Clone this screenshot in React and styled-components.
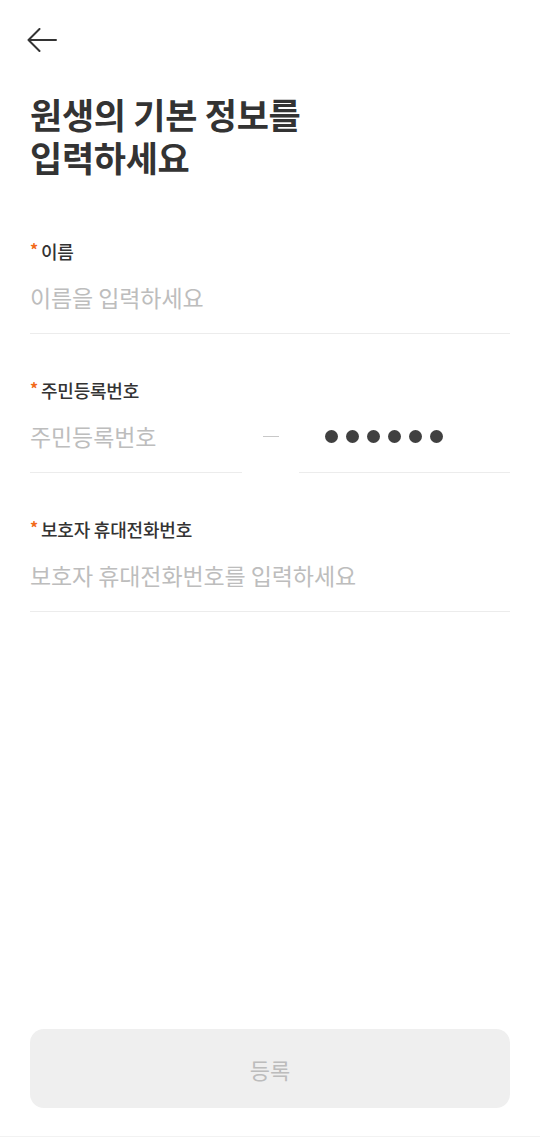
import React from 'react'
import styled, { createGlobalStyle } from 'styled-components'

const GlobalStyle = createGlobalStyle`
  * { box-sizing: border-box; }
  html, body { margin: 0; padding: 0; background: #fff; }
  body {
    font-family: "Noto Sans CJK KR", "Noto Sans", sans-serif;
    color: #333;
  }
`

const Page = styled.div`
  min-height: 1137px;
  display: flex;
  flex-direction: column;
  padding: 0 30px 28px;
  border-bottom: 1px solid #f2f2f2;
`

const Header = styled.div`
  height: 80px;
  display: flex;
  align-items: center;
  margin-left: -4px;
`

const BackButton = styled.button`
  border: none;
  background: none;
  padding: 0;
  cursor: pointer;
  display: flex;
  svg { display: block; }
`

const Title = styled.h1`
  margin: 12px 0 0;
  font-size: 35px;
  line-height: 43px;
  font-weight: 700;
  letter-spacing: -0.3px;
  color: #333;
`

const Form = styled.div`
  margin-top: 61px;
  display: flex;
  flex-direction: column;
  gap: 44px;
`

const Field = styled.div`
  display: flex;
  flex-direction: column;
`

const Label = styled.label`
  display: flex;
  align-items: center;
  height: 24px;
  font-size: 18px;
  font-weight: 500;
  color: #333;
  letter-spacing: -0.2px;
`

const Star = styled.span`
  color: #f26a1b;
  font-size: 16px;
  font-weight: 700;
  margin-right: 3px;
  align-self: flex-start;
  line-height: 20px;
`

const Row = styled.div`
  margin-top: 10px;
  display: flex;
  align-items: stretch;
`

const Input = styled.input`
  flex: ${p => (p.$half ? '0 0 212px' : '1')};
  width: 100%;
  min-width: 0;
  height: 61px;
  padding: 0 0 12px;
  border: none;
  border-bottom: 1px solid #ececec;
  outline: none;
  font-family: inherit;
  font-size: 23px;
  letter-spacing: -0.1px;
  color: #333;
  background: transparent;
  &::placeholder { color: #bdbdbd; }
`

const Dash = styled.div`
  flex: 1;
  display: flex;
  align-items: center;
  justify-content: center;
  padding-bottom: 12px;
  &::before {
    content: '';
    width: 16px;
    height: 1.5px;
    background: #c8c8c8;
  }
`

const Masked = styled.div`
  flex: 0 0 211px;
  height: 61px;
  padding: 0 0 12px 26px;
  border-bottom: 1px solid #ececec;
  display: flex;
  align-items: center;
  gap: 8px;
`

const Dot = styled.span`
  width: 13px;
  height: 13px;
  border-radius: 50%;
  background: #404040;
`

const Spacer = styled.div`
  flex: 1;
`

const Submit = styled.button`
  height: 79px;
  width: 100%;
  border: none;
  border-radius: 14px;
  background: #efefef;
  color: #bcbcbc;
  font-family: inherit;
  font-size: 22px;
  font-weight: 400;
  cursor: default;
`

const BackIcon = () => (
  <svg width="32" height="24" viewBox="0 0 32 24" fill="none">
    <path d="M30 12H2.5M13.5 1L2.5 12l11 11" stroke="#333" strokeWidth="2" strokeLinecap="round" strokeLinejoin="round" />
  </svg>
)

const App = () => {
  return (
    <Page>
      <GlobalStyle />
      <Header>
        <BackButton aria-label="뒤로가기">
          <BackIcon />
        </BackButton>
      </Header>

      <Title>
        원생의 기본 정보를
        <br />
        입력하세요
      </Title>

      <Form>
        <Field>
          <Label><Star>*</Star>이름</Label>
          <Row>
            <Input placeholder="이름을 입력하세요" />
          </Row>
        </Field>

        <Field>
          <Label><Star>*</Star>주민등록번호</Label>
          <Row>
            <Input $half placeholder="주민등록번호" />
            <Dash />
            <Masked>
              {[0, 1, 2, 3, 4, 5].map(i => <Dot key={i} />)}
            </Masked>
          </Row>
        </Field>

        <Field>
          <Label><Star>*</Star>보호자 휴대전화번호</Label>
          <Row>
            <Input placeholder="보호자 휴대전화번호를 입력하세요" />
          </Row>
        </Field>
      </Form>

      <Spacer />
      <Submit disabled>등록</Submit>
    </Page>
  )
}

export default App
